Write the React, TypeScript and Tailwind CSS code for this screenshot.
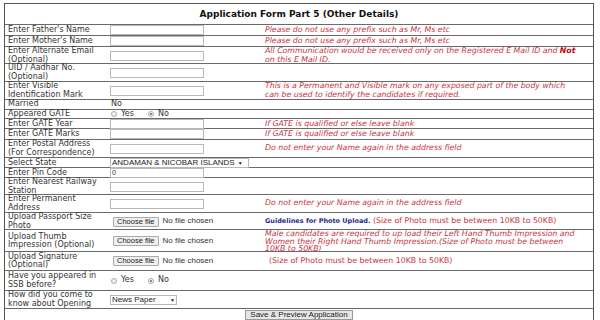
import React from 'react';

const red = 'text-[#c8323c] italic';

const Box = ({ value = '' }: { value?: string }) => (
  <div className="w-[94px] h-[10px] border border-[#b8b8b8] bg-white text-[7px] leading-[8px] pl-[1px] text-[#333] font-['Liberation_Sans',Arial,sans-serif]">{value}</div>
);

const Radio = ({ on }: { on?: boolean }) => (
  <span className="w-[6px] h-[6px] rounded-full border border-[#aaa] bg-[#f2f2f2] flex items-center justify-center">
    {on && <span className="w-[2px] h-[2px] rounded-full bg-[#666]" />}
  </span>
);

const YesNo = () => (
  <div className="flex items-center gap-[4px] pl-[1px]">
    <Radio /><span className="mr-[10px]">Yes</span>
    <Radio on /><span>No</span>
  </div>
);

const FileBox = () => (
  <div className="flex items-center gap-[4px] pl-[3px] font-['Liberation_Sans',Arial,sans-serif] text-[7.5px]">
    <span className="h-[10px] px-[3px] border border-[#a9a9a9] bg-[#efefef] rounded-[1px] leading-[8px] text-[#222]">Choose file</span>
    <span className="text-[#333] text-[8px]">No file chosen</span>
  </div>
);

const Drop = ({ text, w }: { text: string; w: string }) => (
  <div className={`${w} h-[10px] border border-[#b8b8b8] bg-white flex items-center gap-[3px] px-[1px] text-[8px] leading-[8px] text-[#222] whitespace-nowrap font-['Liberation_Sans',Arial,sans-serif]`}>
    <span>{text}</span><span className="text-[5px]">▼</span>
  </div>
);

type Row = { h: string; label: React.ReactNode; field?: React.ReactNode; note?: React.ReactNode };

const rows: Row[] = [
  { h: 'h-[11px]', label: "Enter Father's Name", field: <Box />, note: <span className={red}>Please do not use any prefix such as Mr, Ms etc</span> },
  { h: 'h-[11px]', label: "Enter Mother's Name", field: <Box />, note: <span className={red}>Please do not use any prefix such as Mr, Ms etc</span> },
  { h: 'h-[17px]', label: <>Enter Alternate Email<br />(Optional)</>, field: <Box />, note: <span className={red}>All Communication would be received only on the Registered E Mail ID and <b className="text-[#c00]">Not</b><br />on this E Mail ID.</span> },
  { h: 'h-[18px]', label: <>UID / Aadhar No.<br />(Optional)</>, field: <Box /> },
  { h: 'h-[18px]', label: <>Enter Visible<br />Identification Mark</>, field: <Box />, note: <span className={red}>This is a Permanent and Visible mark on any exposed part of the body which<br />can be used to identify the candidates if required.</span> },
  { h: 'h-[10px]', label: 'Married', field: <span className="pl-[1px]">No</span> },
  { h: 'h-[9px]', label: 'Appeared GATE', field: <YesNo /> },
  { h: 'h-[10px]', label: 'Enter GATE Year', field: <Box />, note: <span className={red}>If GATE is qualified or else leave blank</span> },
  { h: 'h-[11px]', label: 'Enter GATE Marks', field: <Box />, note: <span className={red}>If GATE is qualified or else leave blank</span> },
  { h: 'h-[18px]', label: <>Enter Postal Address<br />(For Correspondence)</>, field: <Box />, note: <span className={red}>Do not enter your Name again in the address field</span> },
  { h: 'h-[10px]', label: 'Select State', field: <Drop text="ANDAMAN & NICOBAR ISLANDS" w="w-[139px]" /> },
  { h: 'h-[10px]', label: 'Enter Pin Code', field: <Box value="0" /> },
  { h: 'h-[17px]', label: <>Enter Nearest Railway<br />Station</>, field: <Box /> },
  { h: 'h-[18px]', label: <>Enter Permanent<br />Address</>, field: <Box />, note: <span className={red}>Do not enter your Name again in the address field</span> },
  { h: 'h-[17px]', label: <>Upload Passport Size<br />Photo</>, field: <FileBox />, note: <span><b className="text-[#1f2a8a] text-[6.5px]">Guidelines for Photo Upload.</b> <span className="text-[#c8323c]">(Size of Photo must be between 10KB to 50KB)</span></span> },
  { h: 'h-[22px]', label: <>Upload Thumb<br />Impression (Optional)</>, field: <FileBox />, note: <span className={`${red} leading-[7.5px]`}>Male candidates are required to up load their Left Hand Thumb Impression and<br />Women their Right Hand Thumb Impression.(Size of Photo must be between<br />10KB to 50KB)</span> },
  { h: 'h-[19px]', label: <>Upload Signature<br />(Optional)</>, field: <FileBox />, note: <span className="text-[#c8323c] pl-[4px]">(Size of Photo must be between 10KB to 50KB)</span> },
  { h: 'h-[20px]', label: <>Have you appeared in<br />SSB before?</>, field: <YesNo /> },
  { h: 'h-[18px]', label: <>How did you come to<br />know about Opening</>, field: <Drop text="News Paper" w="w-[67px] justify-between" /> },
];

export default function App() {
  return (
    <div className="w-[600px] h-[320px] bg-white pt-[3px] pl-[4px] font-['DejaVu_Sans',Verdana,sans-serif] text-[8px] leading-[8.5px] text-[#333]">
      <div className="w-[590px] border border-[#555]">
        <div className="h-[20px] flex items-center justify-center font-bold text-[9px] text-[#111]">Application Form Part 5 (Other Details)</div>
        {rows.map((r, i) => (
          <div key={i} className={`grid grid-cols-[103px_157px_1fr] border-t border-[#6a6a6a] ${r.h}`}>
            <div className="pl-[3px] flex items-center whitespace-nowrap">{r.label}</div>
            <div className="flex items-center pl-[2px]">{r.field}</div>
            <div className="flex items-center whitespace-nowrap text-[7.8px]">{r.note}</div>
          </div>
        ))}
        <div className="h-[12px] border-t border-[#6a6a6a] flex items-center justify-center">
          <span className="h-[10px] px-[4px] border border-[#999] bg-[#e6e6e6] text-[8px] leading-[8px] text-[#222] font-['Liberation_Sans',Arial,sans-serif]">Save &amp; Preview Application</span>
        </div>
      </div>
    </div>
  );
}
